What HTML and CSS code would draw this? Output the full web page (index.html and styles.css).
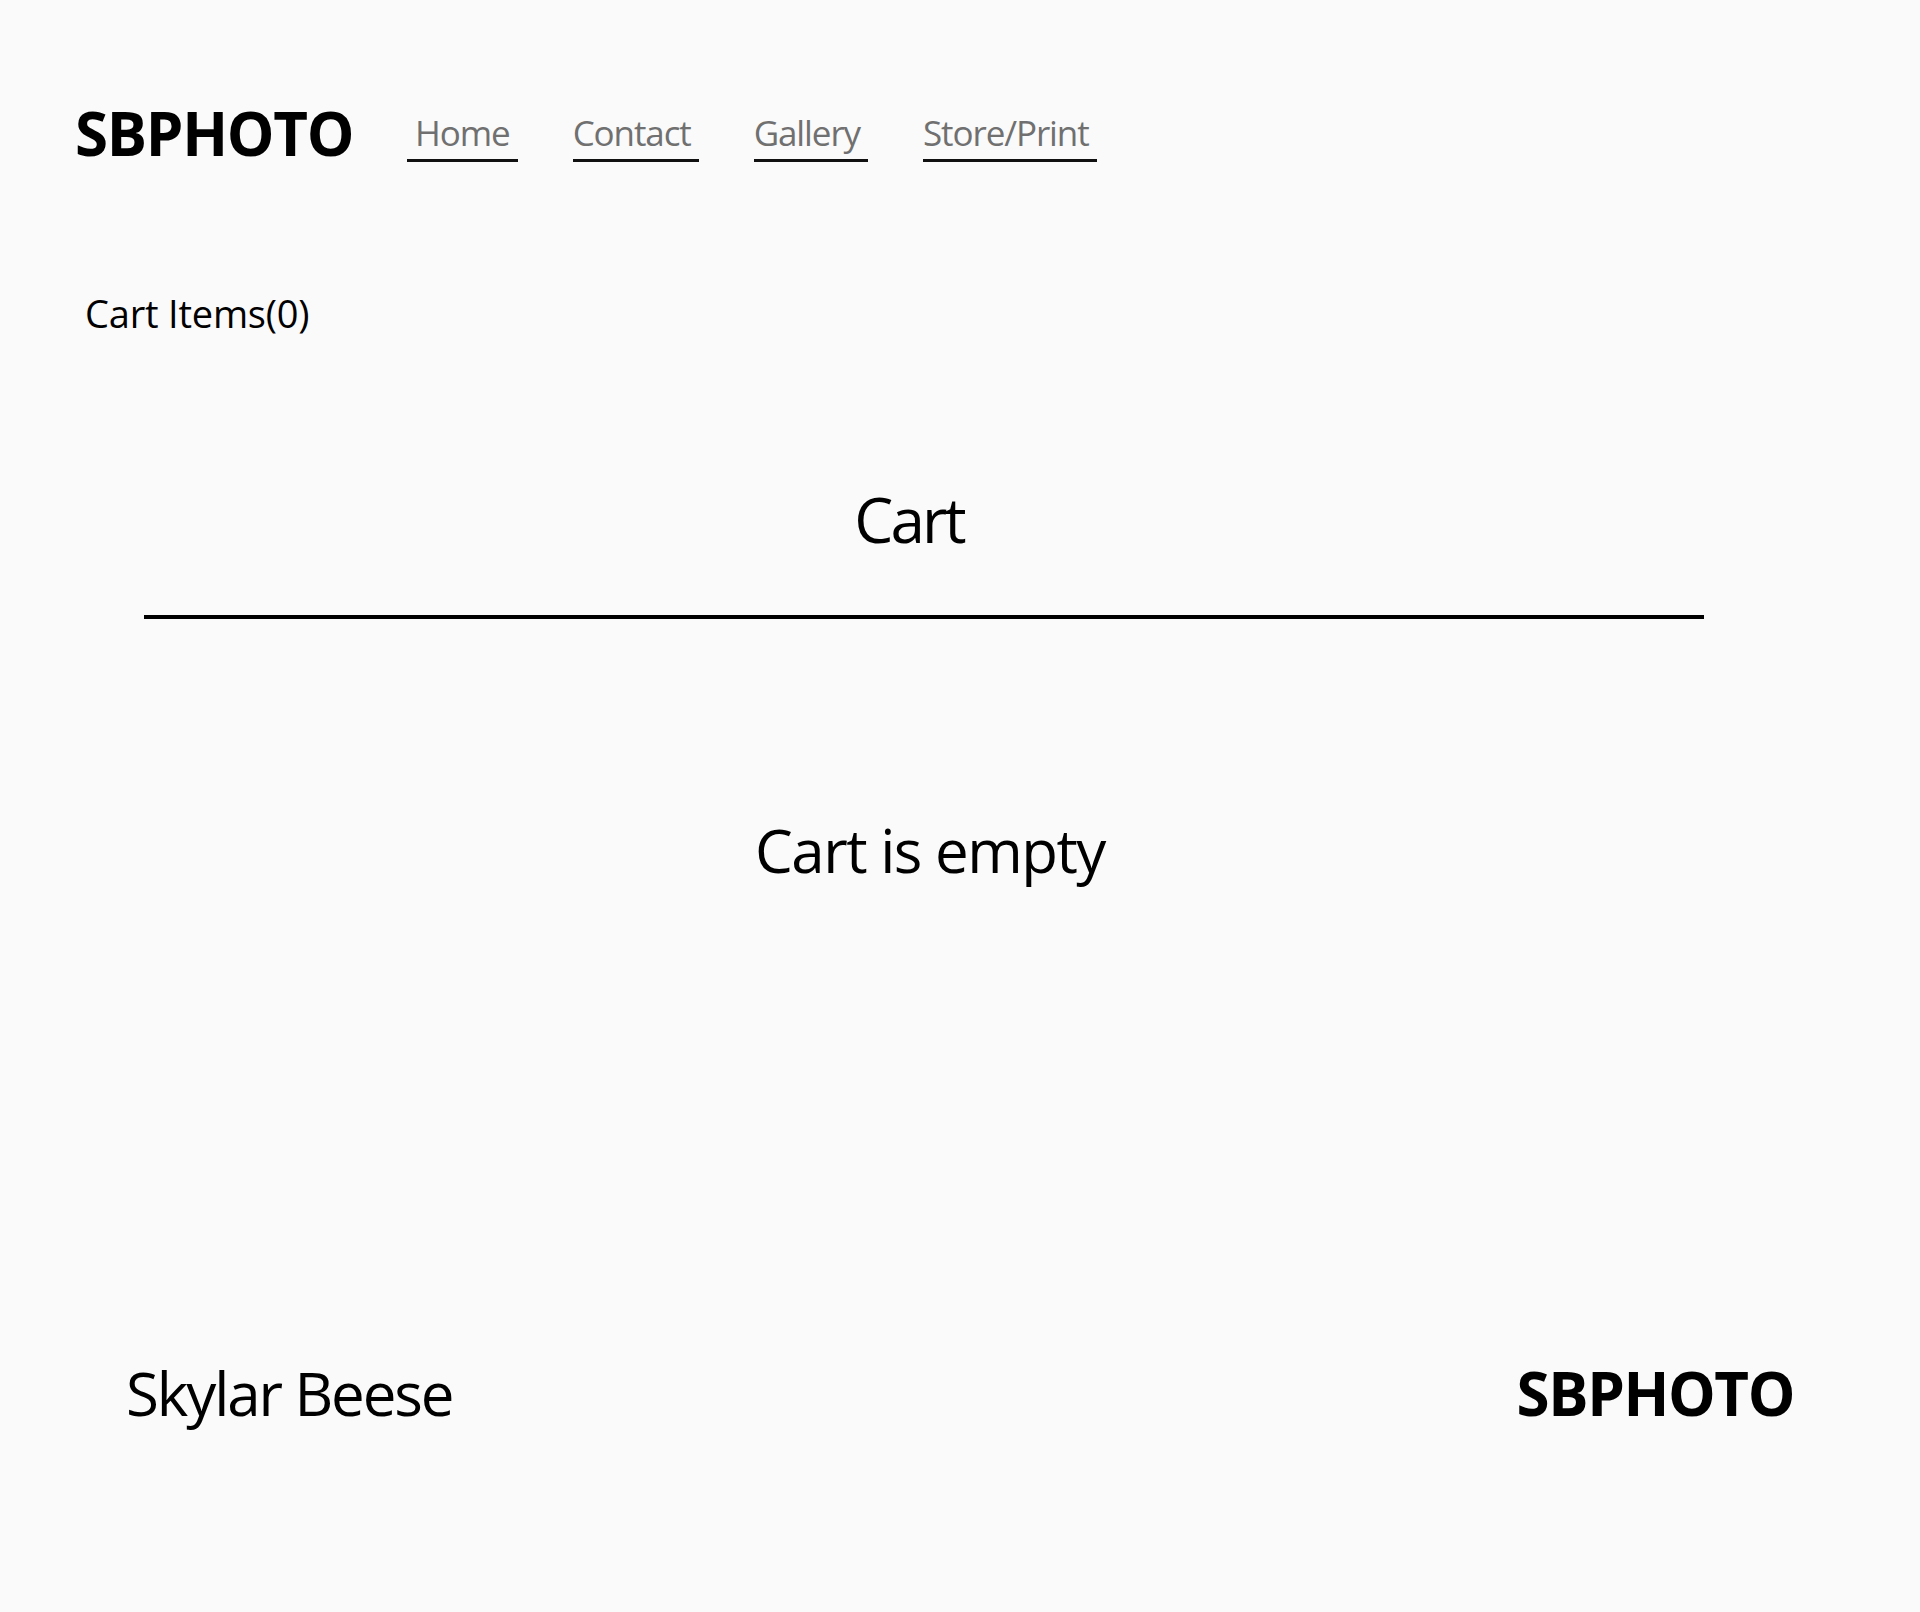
FILE: index.html
```html
<!DOCTYPE html>
<html lang="en">
<head>
<meta charset="utf-8">
<title>SBPHOTO - Cart</title>
<link rel="stylesheet" href="styles.css">
</head>
<body>
<header class="site-header">
  <div class="logo">SBPHOTO</div>
  <nav class="nav">
    <a class="nav-link nav-link-first" href="#">Home</a>
    <a class="nav-link" href="#">Contact</a>
    <a class="nav-link" href="#">Gallery</a>
    <a class="nav-link" href="#">Store/Print</a>
  </nav>
</header>
<main class="main">
  <div class="cart-items">Cart Items(0)</div>
  <section class="cart">
    <h2 class="cart-title">Cart</h2>
    <hr class="cart-rule">
    <p class="cart-empty">Cart is empty</p>
  </section>
</main>
<footer class="site-footer">
  <div class="footer-name">Skylar Beese</div>
  <div class="footer-logo">SBPHOTO</div>
</footer>
</body>
</html>
```
FILE: styles.css
```css
html, body {
  margin: 0;
  padding: 0;
}
body {
  background: #fafafa;
  color: #000;
  font-family: "Open Sans", "Noto Sans", sans-serif;
  min-height: 1612px;
}
.site-header {
  display: flex;
  align-items: flex-start;
  padding: 103px 0 0 75px;
}
.logo {
  font-size: 60px;
  line-height: 1;
  font-weight: 700;
  letter-spacing: -1.3px;
}
.nav {
  display: flex;
  margin-top: 12px;
  margin-left: 54px;
  gap: 55px;
}
.nav-link {
  font-size: 35px;
  line-height: 1;
  color: #707070;
  text-decoration: none;
  letter-spacing: -1.1px;
  padding: 0 8px 9px 0;
  border-bottom: 3px solid #111;
}
.nav-link-first {
  padding-left: 8px;
}
.cart-items {
  margin-top: 131px;
  padding-left: 85px;
  font-size: 38px;
  line-height: 1;
  letter-spacing: -0.2px;
}
.cart {
  margin-left: 144px;
  width: 1560px;
}
.cart-title {
  margin: 156px 0 0;
  padding-right: 30px;
  text-align: center;
  font-size: 62px;
  line-height: 1;
  font-weight: 400;
  letter-spacing: -2.8px;
}
.cart-rule {
  margin: 65px 0 0;
  border: 0;
  height: 4px;
  background: #000;
}
.cart-empty {
  margin: 201px 0 0;
  padding-left: 12px;
  text-align: center;
  font-size: 60px;
  line-height: 1;
  letter-spacing: -1.5px;
}
.site-footer {
  display: flex;
  justify-content: space-between;
  margin-top: 483px;
  padding: 0 126px 0 126px;
  font-size: 60px;
  line-height: 1;
}
.footer-name {
  letter-spacing: -2.1px;
}
.footer-logo {
  font-weight: 700;
  letter-spacing: -1.4px;
}
```
